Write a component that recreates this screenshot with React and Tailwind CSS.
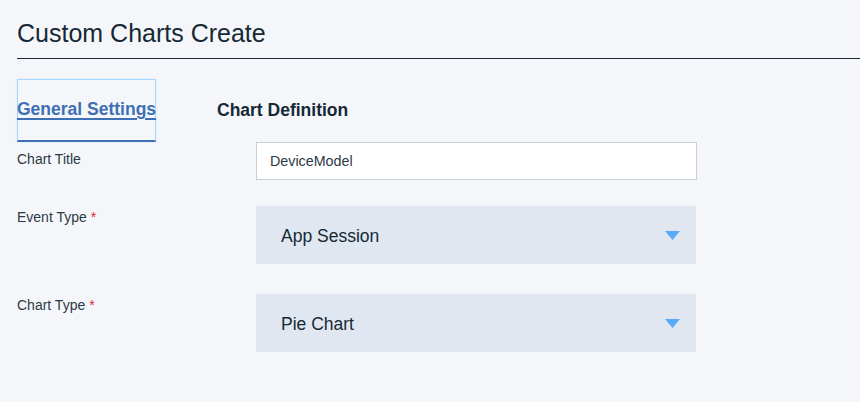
import React from "react";

function Arrow() {
  return (
    <svg width="15" height="9" viewBox="0 0 15 9" className="shrink-0">
      <polygon points="0,0 15,0 7.5,9" fill="#5aaafa" />
    </svg>
  );
}

function Label({ children, required, pt }) {
  return (
    <div className={`w-[239px] shrink-0 text-[14px] leading-4 text-[#2c3a46] ${pt}`}>
      {children}
      {required && <span className="ml-[4px] text-[#e71d32]">*</span>}
    </div>
  );
}

function Select({ value }) {
  return (
    <div className="flex h-[58px] w-[440px] items-center justify-between bg-[#e0e7f1] pl-[25px] pr-[16px]">
      <span className="pt-[3px] text-[17.5px] text-[#152935]">{value}</span>
      <Arrow />
    </div>
  );
}

export default function App() {
  return (
    <div className="min-h-screen bg-[#f5f6fa] pl-[17px] font-['Liberation_Sans',Arial,sans-serif]">
      <div className="border-b border-[#152935] pt-[19px] pb-[11px] text-[25px] leading-[28px] text-[#152935]">
        Custom Charts Create
      </div>

      <div className="mt-[20px] flex items-start">
        <div className="flex h-[63px] w-[139px] flex-col border border-[#a9d6ff] border-b-2 border-b-[#3d70b2] pt-[19px] shadow-[0_0_2px_#cfe8ff]">
          <span className="-ml-px whitespace-nowrap text-[17.5px] font-bold leading-5 text-[#3d70b2] underline decoration-2 underline-offset-[3px]">
            General Settings
          </span>
        </div>
        <div className="ml-[61px] pt-[21px] text-[17.5px] font-bold leading-5 text-[#152935]">
          Chart Definition
        </div>
      </div>

      <div className="flex items-start">
        <Label pt="pt-[9px]">Chart Title</Label>
        <div className="flex h-[38px] w-[441px] items-center border border-[#c9d0d5] bg-white px-[13px] pt-[2px] text-[14.3px] text-[#2c3a46]">
          DeviceModel
        </div>
      </div>

      <div className="mt-[26px] flex items-start">
        <Label pt="pt-[3px]" required>
          Event Type
        </Label>
        <Select value="App Session" />
      </div>

      <div className="mt-[30px] flex items-start">
        <Label pt="pt-[3px]" required>
          Chart Type
        </Label>
        <Select value="Pie Chart" />
      </div>
    </div>
  );
}
